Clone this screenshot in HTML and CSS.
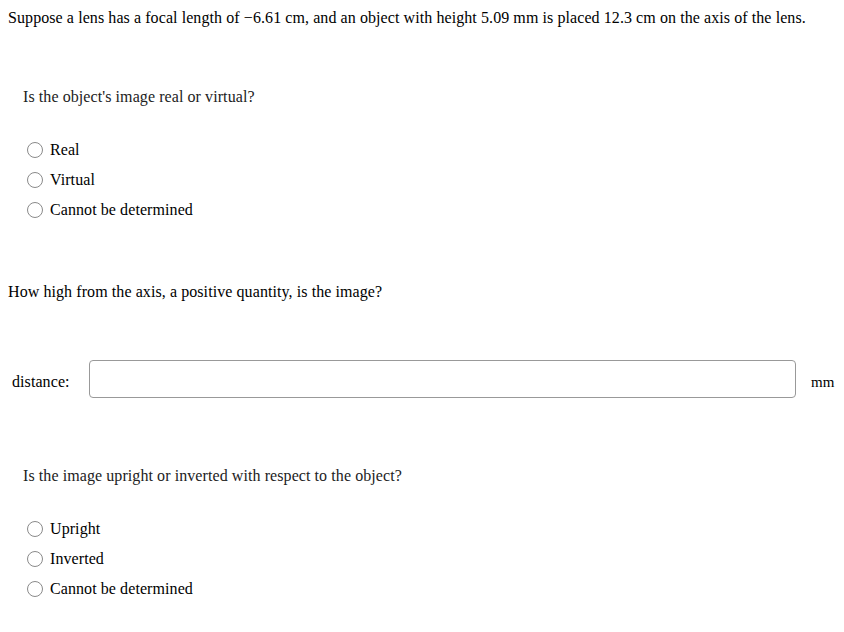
FILE: index.html
```html
<!DOCTYPE html>
<html>
<head>
<meta charset="utf-8">
<link rel="stylesheet" href="styles.css">
</head>
<body>
<p class="intro">Suppose a lens has a focal length of &minus;6.61&nbsp;cm, and an object with height 5.09&nbsp;mm is placed 12.3&nbsp;cm on the axis of the lens.</p>

<div class="question q1">
  <p class="qtext">Is the object's image real or virtual?</p>
  <ul class="choices">
    <li class="choice"><input type="radio" name="a" class="radio"><span>Real</span></li>
    <li class="choice"><input type="radio" name="a" class="radio"><span>Virtual</span></li>
    <li class="choice"><input type="radio" name="a" class="radio"><span>Cannot be determined</span></li>
  </ul>
</div>

<p class="prompt">How high from the axis, a positive quantity, is the image?</p>

<div class="answer-row">
  <label class="ans-label">distance:</label>
  <input type="text" class="ans-input">
  <span class="unit">mm</span>
</div>

<div class="question q2">
  <p class="qtext">Is the image upright or inverted with respect to the object?</p>
  <ul class="choices">
    <li class="choice"><input type="radio" name="b" class="radio"><span>Upright</span></li>
    <li class="choice"><input type="radio" name="b" class="radio"><span>Inverted</span></li>
    <li class="choice"><input type="radio" name="b" class="radio"><span>Cannot be determined</span></li>
  </ul>
</div>
</body>
</html>
```
FILE: styles.css
```css
html, body {
  background: #fff;
}
body {
  margin: 8px;
  font-family: "Liberation Serif", "Times New Roman", serif;
  font-size: 16px;
  line-height: 18px;
  letter-spacing: 0.08px;
  color: #000;
}
.intro {
  margin: 0;
  padding-top: 1px;
}
.question {
  padding-left: 15px;
}
.q1 {
  margin-top: 61px;
}
.q2 {
  margin-top: 69px;
}
.qtext {
  margin: 0;
  color: #222;
}
.choices {
  list-style: none;
  margin: 29px 0 0 0;
  padding: 0;
}
.choice {
  display: flex;
  align-items: center;
  height: 30px;
}
.radio {
  appearance: none;
  -webkit-appearance: none;
  box-sizing: border-box;
  width: 16px;
  height: 16px;
  margin: 0 7px 0 4px;
  border: 1px solid #8a8a8a;
  border-radius: 50%;
  background: #fff;
}
.prompt {
  margin: 58px 0 0 0;
}
.answer-row {
  display: flex;
  align-items: center;
  margin-top: 59px;
}
.ans-label {
  flex: 0 0 auto;
  box-sizing: border-box;
  width: 81px;
  padding-left: 4px;
  padding-top: 6px;
}
.ans-input {
  flex: 0 0 auto;
  box-sizing: border-box;
  width: 707px;
  height: 38px;
  margin: 0;
  border: 1px solid #999;
  border-radius: 4px;
  background: #fff;
  font: inherit;
  padding: 0 8px;
}
.unit {
  flex: 0 0 auto;
  margin-left: 15px;
  padding-top: 6px;
  font-size: 15px;
  letter-spacing: 0;
  white-space: nowrap;
}
```
